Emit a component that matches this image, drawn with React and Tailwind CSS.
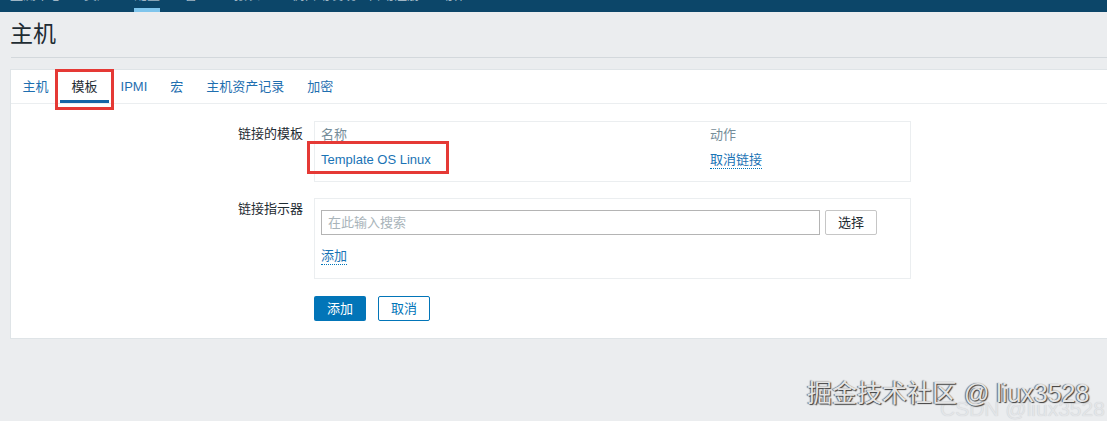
const font = { fontFamily: '"Liberation Sans", "Noto Sans CJK SC", Arial, sans-serif' };

const navItems = [
  { label: '监测中心', w: 'w-[52px]', ml: 'ml-[10px]' },
  { label: '资产', w: 'w-[28px]', ml: 'ml-[22px]' },
  { label: '配置', w: 'w-[26px]', ml: 'ml-[22px]', active: true },
  { label: '管理', w: 'w-[18px]', ml: 'ml-[24px]' },
  { label: '报表', w: 'w-[18px]', ml: 'ml-[32px]' },
  { label: '主机自动发现', w: 'w-[66px]', ml: 'ml-[26px]' },
  { label: '自动注册', w: 'w-[52px]', ml: 'ml-[24px]' },
  { label: '动作', w: 'w-[26px]', ml: 'ml-[20px]' },
];

const tabs = ['主机', '模板', 'IPMI', '宏', '主机资产记录', '加密'];

function TopNav() {
  return (
    <div className="flex h-[12px] overflow-hidden bg-[#0c4669]">
      {navItems.map((item) => (
        <div key={item.label} className={`relative h-[12px] ${item.w} ${item.ml}`}>
          <span className="absolute -top-[13px] left-0 whitespace-nowrap text-[13px] leading-[15px] text-[#9fb6c5]">
            {item.label}
          </span>
          {item.active && (
            <span className="absolute bottom-0 left-0 h-[4px] w-full bg-[#7fc5ec]" />
          )}
        </div>
      ))}
    </div>
  );
}

function Tabs() {
  return (
    <div className="flex h-[34px] border-b border-[#ebeef0]">
      {tabs.map((t) => {
        const active = t === '模板';
        return (
          <div key={t} className="relative flex h-[33px] items-center px-[11.5px] text-[13px]">
            <span className={active ? 'text-[#1f2c33]' : 'text-[#1f6fb0]'}>{t}</span>
            {active && (
              <>
                <span className="absolute bottom-0 left-0 h-[3px] w-full bg-[#1565a6]" />
                <span className="absolute -left-[5px] -right-[5px] -top-[1px] -bottom-[7px] border-[3px] border-[#e53935]" />
              </>
            )}
          </div>
        );
      })}
    </div>
  );
}

function DottedLink({ children }) {
  return (
    <span className="border-b border-dotted border-[#0275b8] leading-[16px] text-[#1a73b5]">
      {children}
    </span>
  );
}

export default function App() {
  return (
    <div className="relative h-[421px] overflow-hidden bg-[#ebedef]" style={font}>
      <TopNav />

      <div className="flex h-[45px] items-center pl-[10px] text-[23px] text-[#1f2c33]">主机</div>
      <div className="ml-[11px] border-t border-[#d3d8dc]" />

      <div className="ml-[10px] mt-[11px] border border-r-0 border-[#dfe4e7] bg-white pb-[17px] text-[13px] text-[#1f2c33]">
        <Tabs />

        <div className="pt-[17px]">
          <div className="flex">
            <div className="w-[292px] pt-[3px] text-right leading-[20px]">链接的模板</div>
            <div className="ml-[11px] h-[61px] w-[597px] border border-[#ebeef0] px-[6px] pt-[3px]">
              <div className="flex h-[20px] items-center text-[#768d99]">
                <div className="w-[389px]">名称</div>
                <div>动作</div>
              </div>
              <div className="mt-[3px] flex h-[24px] items-center">
                <div className="relative w-[389px]">
                  <span className="text-[#1a73b5]">Template OS Linux</span>
                  <span className="absolute -left-[14px] -top-[9px] h-[33px] w-[142px] border-[3px] border-[#e53935]" />
                </div>
                <DottedLink>取消链接</DottedLink>
              </div>
            </div>
          </div>

          <div className="mt-[16px] flex">
            <div className="w-[292px] pt-[1px] text-right leading-[20px]">链接指示器</div>
            <div className="ml-[11px] h-[81px] w-[597px] border border-[#ebeef0] px-[6px] pt-[11px]">
              <div className="flex items-center gap-[5px]">
                <div className="flex h-[25px] w-[499px] items-center border border-[#b4b4b4] px-[6px] text-[#a9b4ba]">
                  在此输入搜索
                </div>
                <div className="flex h-[25px] w-[52px] items-center justify-center rounded-[2px] border border-[#c6c6c6] bg-white">
                  选择
                </div>
              </div>
              <div className="mt-[12px] flex h-[18px] items-center">
                <DottedLink>添加</DottedLink>
              </div>
            </div>
          </div>

          <div className="ml-[303px] mt-[17px] flex gap-[12px]">
            <div className="flex h-[25px] w-[52px] items-center justify-center rounded-[2px] bg-[#0275b8] text-white">
              添加
            </div>
            <div className="flex h-[25px] w-[52px] items-center justify-center rounded-[2px] border border-[#0275b8] bg-white text-[#0275b8]">
              取消
            </div>
          </div>
        </div>
      </div>

      <div className="absolute left-[940px] top-[393px] whitespace-nowrap text-[21px] text-[#e3e5e8] [text-shadow:0_0_1px_#c4c8cc]">
        CSDN @liux3528
      </div>
      <div className="absolute left-[807px] top-[378px] whitespace-nowrap text-[25px] leading-[30px] text-[#e4e4e4] [text-shadow:1px_1px_1px_#3a3a3a,-1px_0_1px_#666]">
        掘金技术社区 @ liux3528
      </div>
    </div>
  );
}
